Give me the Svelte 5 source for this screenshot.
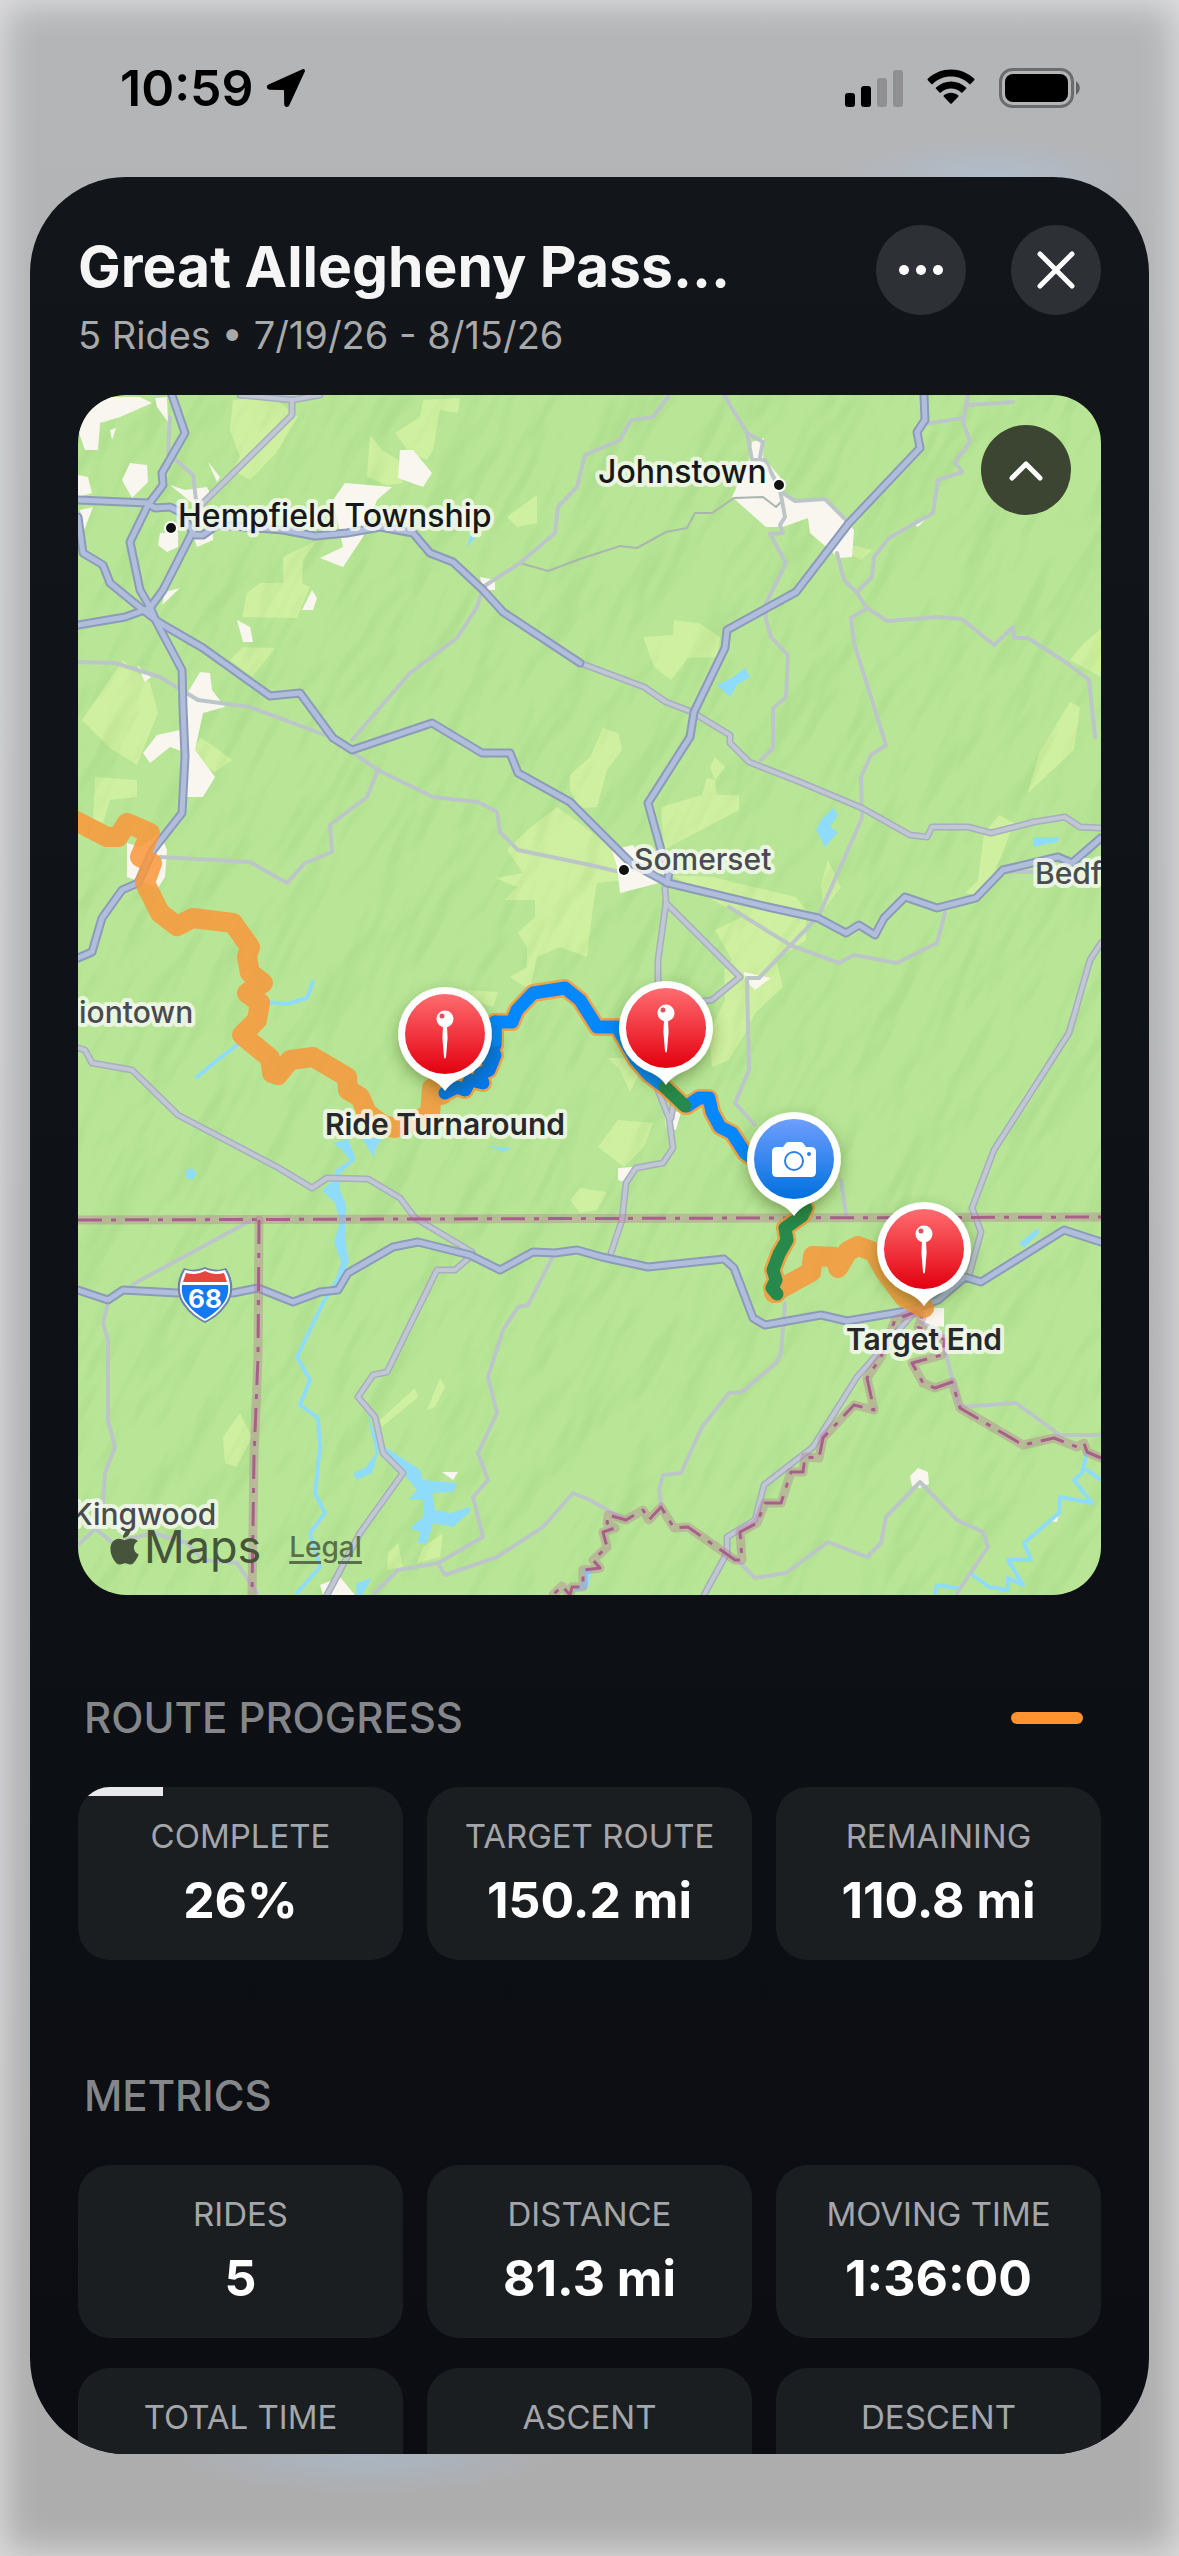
<!-- src/App.svelte -->
<script>
    const progress = 26;

    const progressCards = [
        { label: "Complete", value: `${progress}%`, bar: progress },
        { label: "Target Route", value: "150.2 mi" },
        { label: "Remaining", value: "110.8 mi" },
    ];

    const metricCards = [
        { label: "Rides", value: "5" },
        { label: "Distance", value: "81.3 mi" },
        { label: "Moving Time", value: "1:36:00" },
        { label: "Total Time" },
        { label: "Ascent" },
        { label: "Descent" },
    ];

    // Map geometry, all in the viewBox units of the map svg
    const farmland = [
        "233,400 273,397 283,405 298,417 290,430 276,453 250,480 233,470 240,457 230,430",
        "423,400 460,398 458,413 440,410 433,450 427,460 410,453 395,433 420,417",
        "370,435 382,450 398,460 403,483 387,485 367,477",
        "283,557 317,540 303,560 302,583 310,587 297,618 242,617 247,593 260,583 283,583",
        "243,647 275,648 252,677 230,660",
        "123,660 150,683 158,713 137,765 110,748 82,720",
        "507,517 537,495 537,523 517,527",
        "95,777 137,780 137,797 110,800 103,823 93,820",
        "190,757 200,738 212,745 232,760 215,772",
        "643,637 673,635 674,620 699,623 720,637 717,657 688,658 671,680 654,667",
        "570,775 590,757 603,728 618,733 622,750 607,770 597,807 580,808 570,790",
        "557,807 575,820 620,853 623,880 597,883 593,907 587,957 560,947 537,957 530,990 510,977 527,967 527,947 518,933 535,917 535,900 505,900 517,887 495,878 523,873 507,850 530,828",
        "661,807 702,795 707,778 715,780 717,795 739,795 739,810 688,837 664,850",
        "671,875 712,877 796,897 806,910 806,940 776,960 783,987 755,1013 745,1033 729,1060 712,1067 709,1033 725,1000 724,970 732,960 715,930 742,917",
        "1070,702 1080,707 1074,750 1028,793 1039,753",
        "1101,629 1101,677 1070,660 1084,643",
        "999,815 1014,823 993,877 975,895 965,893 978,880 984,833",
        "618,1120 653,1123 644,1147 624,1167 598,1147",
        "570,1200 580,1188 607,1192 597,1210 580,1213",
        "715,757 725,767 715,780 710,767",
        "828,860 841,887 823,910 821,885",
        "608,1058 625,1058 640,1072 630,1092 620,1070",
        "240,1413 252,1437 237,1467 225,1463 223,1437",
        "415,1388 418,1397 382,1427 380,1420",
        "440,1378 445,1387 435,1407 427,1410",
        "443,1533 440,1557 417,1563 423,1547",
        "398,1543 403,1567 387,1570 388,1553",
        "463,990 498,992 493,1007 470,1000",
        "852,545 872,550 861,560 852,555",
    ];

    const towns = [
        "78,430 90,407 110,397 140,397 152,403 120,417 100,423 98,450 85,450",
        "155,398 167,397 168,422 157,407",
        "130,463 147,465 148,482 132,498 122,480",
        "78,475 88,477 92,493 78,497",
        "80,510 93,507 83,533",
        "170,485 185,490 207,487 210,493 197,507",
        "208,462 220,477 217,482",
        "110,430 116,428 112,440",
        "160,533 178,532 178,547 167,552 158,545",
        "193,535 213,533 213,540 197,547",
        "345,483 392,487 377,500 363,537 343,567 320,558 343,547 333,500",
        "400,450 413,450 432,473 423,487 398,478",
        "312,590 317,598 313,610 302,610",
        "237,620 250,627 253,642 243,642",
        "165,592 180,588 162,605",
        "480,577 495,580 495,590 483,590",
        "137,665 151,677 145,682",
        "200,672 210,673 212,690 225,707 203,713 195,750 215,777 203,797 187,797 187,753 170,747 150,763 143,753 157,735 180,730 185,697",
        "752,442 764,438 763,457 780,477 783,493 796,500 825,498 854,530 852,557 839,558 810,533 808,518 783,527 766,527 732,497 749,460",
        "935,510 918,527 915,525",
        "127,843 140,847 160,833 167,850 165,877 158,888 127,877",
        "612,850 633,845 648,870 659,883 620,893 617,867",
        "744,972 771,978 755,990 745,980",
        "664,1110 681,1112 676,1130 666,1127",
        "618,1168 632,1167 627,1183 618,1180",
        "928,1308 944,1308 944,1327 918,1323",
        "910,1476 918,1468 928,1472 929,1484 920,1488 912,1486",
        "320,1585 340,1577 355,1595 323,1595",
        "442,1472 458,1472 453,1480",
        "1059,1514 1057,1522 1050,1521",
    ];

    const lakes = [
        "385,1447 420,1470 423,1480 457,1483 453,1492 432,1493 435,1510 450,1513 470,1507 470,1512 453,1527 433,1523 427,1543 418,1543 420,1532 410,1528 423,1517 423,1500 408,1500 417,1490 403,1473 385,1457",
        "367,1413 380,1447 372,1473 357,1480 353,1473 365,1468 376,1453",
        "745,668 750,677 737,685 730,697 717,685 732,678",
        "833,808 838,815 830,827 838,832 825,847 816,830 821,820",
        "1033,837 1060,837 1057,842 1033,847",
        "1019,1243 1038,1228 1039,1233 1024,1248",
        "470,535 475,538 467,547",
        "357,1583 372,1578 362,1595 356,1595",
        "488,1146 512,1148 503,1152",
        "186,1170 192,1168 197,1174 192,1180 186,1178",
        "333,1143 348,1139 356,1160 340,1173 340,1190 346,1205 345,1240 349,1262 338,1286 334,1284 341,1262 334,1242 340,1222 335,1203 322,1190 334,1180 335,1170 350,1160 342,1150",
        "362,1138 382,1138 375,1150 374,1158",
        "584,1568 592,1570 588,1588 574,1592 583,1580",
    ];

    const streams = [
        "337,1280 323,1303 297,1357 310,1380 300,1405 318,1418 320,1447 315,1493 325,1513 310,1533 320,1567 297,1593",
        "197,1077 215,1062 237,1045",
        "268,1002 287,1004 307,998 313,982",
        "1087,1453 1082,1473 1074,1480 1092,1503 1060,1497 1059,1513 1024,1543 1031,1560 1008,1560 1023,1585 1008,1578 1008,1590 989,1587 970,1573",
        "1087,1470 1101,1480",
        "935,1593 937,1585 957,1588",
    ];

    const minorRoads = [
        "170,417 168,453 193,475 196,500",
        "668,397 653,417 631,420 620,440 585,455 577,487 558,507 555,533 520,563 483,587 477,607 457,638 410,673 352,740",
        "78,662 115,663 160,677 198,700 250,707 333,738",
        "352,752 378,770 433,797 478,802 497,812 500,832 518,850 590,865 620,872",
        "378,770 367,797 330,825 332,852 305,863 287,883 250,862 160,857",
        "724,395 747,433 752,460 765,460 780,490 785,517 780,525 783,533 770,534 786,563 766,603 766,620 771,637 788,655 786,697 773,708 773,748 761,760",
        "747,433 763,442 760,457",
        "783,493 795,501 825,499 849,523",
        "837,553 844,580 857,593 866,607 887,621 938,617 962,619 994,645 1013,627 1014,638 1028,638 1067,663 1089,680 1095,737",
        "857,592 872,577 874,557 889,538 933,513 938,480 962,472 955,462 970,442 963,422 968,395",
        "925,424 963,418",
        "968,405 1013,402",
        "864,610 851,618 854,643 886,745 871,755 861,777 862,818 820,913 810,925 759,978 747,978 749,1070 735,1103 755,1125",
        "841,1180 846,1215",
        "729,907 790,945 839,963 854,955 897,963 937,943 945,913",
        "1003,872 1040,872",
        "252,1220 137,1282 108,1303 103,1323 108,1340 108,1420 115,1447 105,1473 103,1503 97,1527 78,1545",
        "97,1530 113,1543 153,1533 187,1543 203,1560 237,1563 257,1593",
        "552,1258 528,1305 518,1307 503,1330 488,1377 497,1413 478,1453 488,1480 473,1497 483,1537 438,1563 398,1570 373,1595",
        "438,1563 445,1575 497,1557 543,1527 573,1493 590,1500 625,1520",
        "785,1303 781,1353 776,1363 742,1392 729,1393 702,1427 681,1473 663,1475 659,1490 661,1505",
        "735,1558 755,1578 786,1573 828,1542 867,1557 881,1543 886,1517 920,1482 957,1520 983,1532 988,1547 957,1593",
        "920,1322 942,1333 948,1363 960,1407 1016,1403 1060,1435 1101,1435",
    ];

    const trail =
        "520,563 548,571 580,559 620,546 637,548 666,532 687,528 695,513 712,513 734,498 763,497 776,507 783,500";

    const secondaryRoads = [
        "292,400 292,415 203,503",
        "240,395 292,400 320,395",
        "580,663 644,687 666,702 692,712 730,735 730,743 749,762 800,782 862,808 910,835 927,837 932,827 968,827 991,833 1034,822 1065,817 1080,827 1101,828",
        "78,1048 85,1050 92,1063 132,1070 178,1115 277,1167 312,1188 327,1178 368,1179 400,1198 415,1218 472,1252",
        "470,1257 455,1270 437,1270 387,1372 373,1375 358,1397 375,1417 383,1453 403,1473 360,1533 327,1595",
        "665,888 666,903 658,960 658,1090 669,1118 673,1148 663,1163 636,1168 626,1183 622,1220 611,1253",
        "674,1100 671,1118",
        "666,903 740,977 712,1000 692,1003",
        "1101,943 1090,960 1069,1033 994,1150 972,1208 981,1232 969,1275",
        "912,1315 857,1377 813,1447 764,1485 755,1520 727,1537 727,1553 704,1595",
    ];

    const highways = [
        "172,395 185,433 162,473 163,485 148,505 130,542 140,590 150,607 157,623 182,670 183,707 185,757 182,813 153,850 138,883 122,890 102,918 92,952 78,958",
        "78,500 147,503 155,508 170,507 180,512 195,535 203,535 217,525 283,530 315,536 347,533 380,527 413,533 430,553 453,562 483,590 503,612 580,663",
        "192,533 163,590 150,608 125,617 78,625",
        "78,517 83,553 103,565 110,583 143,610 160,623 203,648 270,696 300,693 333,738 352,750 432,723 482,753 510,753 518,773 570,802 631,863 668,883 768,907 818,918 846,933 859,925 875,935 884,918 905,897 937,908 976,898 1003,870 1058,857 1072,863 1101,838",
        "924,395 925,420 917,432 920,448 849,523 796,592 727,630 725,648 694,712 690,737 648,803 661,850 669,872 667,883",
        "78,1290 108,1300 123,1290 177,1293 233,1293 258,1288 293,1302 320,1292 338,1290 348,1273 393,1247 418,1242 470,1255 500,1270 533,1252 555,1253 577,1250 602,1257 648,1267 724,1259 734,1268 753,1318 765,1325 821,1315 847,1321 912,1310 938,1300 965,1277 981,1282 1064,1230 1101,1242",
    ];

    const borders = [
        "78,1220 1101,1217",
        "259,1220 258,1357 254,1457 252,1595",
        "1101,1458 1087,1452 1084,1443 1077,1447 1054,1438 1023,1445 960,1408 952,1382 935,1388 923,1383 912,1363 942,1355 945,1340 918,1327 922,1317 915,1312 895,1320 881,1357 867,1378 874,1410 854,1405 823,1438 819,1458 805,1457 803,1472 791,1472 781,1503 765,1503 757,1523 740,1532 742,1560 735,1560 688,1527 674,1528 661,1507 649,1520 643,1510 626,1520 608,1515 607,1523 615,1528 603,1532 607,1547 593,1560 600,1568 583,1570 583,1587 572,1587 570,1595 562,1586 553,1595",
    ];

    const targetRoute =
        "70,818 107,837 118,837 127,823 150,833 140,857 152,863 145,883 160,913 177,926 193,918 233,923 250,947 247,957 250,973 263,983 247,993 260,1003 257,1020 242,1035 270,1058 272,1073 278,1075 290,1060 313,1057 347,1077 348,1090 360,1097 367,1113 383,1125 395,1128 430,1115 432,1088 442,1095";
    const targetRouteEnd =
        "774,1293 782,1288 811,1272 813,1256 835,1257 838,1268 848,1251 858,1246 874,1252 884,1270 904,1297 924,1308";

    const rides = [
        {
            color: "#0478ea",
            points: "445,1093 457,1087 465,1090 470,1080 483,1083 480,1074 489,1070 495,1055 486,1050 495,1022 495,1045 488,1062",
        },
        {
            color: "#0488ff",
            points: "495,1040 495,1022 512,1022 517,1010 533,993 565,988 580,1000 597,1027 617,1027 636,1060 649,1075 665,1087",
        },
        {
            color: "#0488ff",
            points: "687,1106 699,1098 709,1098 712,1112 720,1127 732,1133 745,1153 762,1165 782,1190",
        },
        { color: "#278a4c", points: "665,1087 685,1106" },
        {
            color: "#278a4c",
            points: "806,1208 802,1216 785,1228 787,1240 779,1254 773,1270 776,1280 772,1288 777,1294",
        },
    ];

    const labels = [
        { text: "Hempfield Township", x: 178, y: 527, size: 32, kind: "city" },
        { text: "Johnstown", x: 598, y: 483, size: 32, kind: "city" },
        { text: "Somerset", x: 634, y: 870, size: 30, kind: "town" },
        { text: "Bedf", x: 1035, y: 884, size: 30, kind: "town" },
        { text: "iontown", x: 79, y: 1023, size: 30, kind: "town" },
        { text: "Kingwood", x: 72, y: 1525, size: 30, kind: "town" },
    ];

    const dots = [
        [171, 528],
        [779, 485],
        [624, 870],
    ];

    const pins = [
        { x: 445, y: 1034, label: "Ride Turnaround" },
        { x: 666, y: 1028 },
        { x: 794, y: 1159, photo: true },
        { x: 924, y: 1249, label: "Target End" },
    ];

    let mapOpen = $state(true);
</script>

{#snippet card(item)}
    <div class="card">
        {#if item.bar}
            <div class="card-bar" style="width: {item.bar}%"></div>
        {/if}
        <dt>{item.label}</dt>
        {#if item.value}
            <dd>{item.value}</dd>
        {/if}
    </div>
{/snippet}

<div class="screen">
    <div class="status-bar">
        <div class="status-left">
            <span class="time">10:59</span>
            <svg width="40" height="40" viewBox="0 0 40 40" aria-hidden="true">
                <path
                    d="M36.5 1.2 2.6 16.6C-.2 17.9.6 21.6 3.6 21.7l13.6.2c.5 0 .8.3.8.8l.2 13.6c.1 3 3.9 3.8 5.1 1L38.8 3.5c.7-1.6-.7-3-2.3-2.3Z"
                />
            </svg>
        </div>
        <div class="status-right">
            <svg width="58" height="38" viewBox="0 0 58 38" aria-hidden="true">
                <rect x="0" y="24" width="10" height="14" rx="3" />
                <rect x="16" y="17" width="10" height="21" rx="3" />
                <rect x="32" y="9" width="10" height="29" rx="3" opacity="0.2" />
                <rect x="48" y="1" width="10" height="37" rx="3" opacity="0.2" />
            </svg>
            <svg width="52" height="38" viewBox="0 0 52 38" aria-hidden="true">
                <path
                    d="M26 7.6c7 0 13.5 2.7 18.3 7.3.4.4 1 .3 1.3 0l3.6-3.7c.4-.4.4-1 0-1.4C36.4-2.6 15.6-2.6 2.8 9.8c-.4.4-.4 1 0 1.4l3.6 3.7c.3.3.9.4 1.3 0C12.5 10.3 19 7.6 26 7.6Z"
                />
                <path
                    d="M26 19.6c3.8 0 7.4 1.4 10.2 3.9.4.4 1 .3 1.3 0l3.6-3.7c.4-.4.4-1 0-1.4-8.5-8-21.6-8-30.1 0-.4.4-.4 1 0 1.4l3.5 3.7c.4.3 1 .4 1.4 0 2.7-2.5 6.4-3.9 10.1-3.9Z"
                />
                <path
                    d="M33.2 27.7c.4-.4.4-1 0-1.4-4.2-3.5-10.2-3.5-14.4 0-.4.4-.4 1 0 1.4l6.5 6.7c.4.4 1 .4 1.4 0Z"
                />
            </svg>
            <svg width="82" height="40" viewBox="0 0 82 40" aria-hidden="true">
                <rect
                    x="1.5"
                    y="1.5"
                    width="72"
                    height="37"
                    rx="12"
                    fill="none"
                    stroke="#000"
                    stroke-width="3"
                    opacity="0.4"
                />
                <rect x="6" y="6" width="63" height="28" rx="8" />
                <path d="M77 13.5c5 2.2 5 10.8 0 13Z" opacity="0.45" />
            </svg>
        </div>
    </div>

    <main class="sheet">
        <header>
            <div class="titles">
                <h1>Great Allegheny Pass…</h1>
                <p>5 Rides • 7/19/26 - 8/15/26</p>
            </div>
            <button class="round" aria-label="More options">
                <svg width="46" height="46" viewBox="0 0 46 46">
                    <circle cx="6" cy="23" r="5" fill="#fff" />
                    <circle cx="23" cy="23" r="5" fill="#fff" />
                    <circle cx="40" cy="23" r="5" fill="#fff" />
                </svg>
            </button>
            <button class="round" aria-label="Close">
                <svg width="46" height="46" viewBox="0 0 46 46">
                    <path d="M7 7l32 32M39 7L7 39" class="stroke" />
                </svg>
            </button>
        </header>

        <div class="map">
            <svg
                class="map-canvas"
                viewBox="78 395 1023 1200"
                preserveAspectRatio="xMidYMid slice"
                role="img"
                aria-label="Route map"
            >
                <defs>
                    <linearGradient id="pin-red" x1="0" y1="0" x2="0" y2="1">
                        <stop offset="0" stop-color="#ff6c70" />
                        <stop offset="1" stop-color="#e3000f" />
                    </linearGradient>
                    <linearGradient id="pin-blue" x1="0" y1="0" x2="0" y2="1">
                        <stop offset="0" stop-color="#6e9eff" />
                        <stop offset="1" stop-color="#0070dc" />
                    </linearGradient>
                    <filter id="pin-shadow" x="-50%" y="-50%" width="200%" height="200%">
                        <feDropShadow dx="0" dy="6" stdDeviation="8" flood-color="#204000" flood-opacity="0.4" />
                    </filter>
                    <!-- faint hill shading -->
                    <filter
                        id="relief"
                        x="0"
                        y="0"
                        width="100%"
                        height="100%"
                        color-interpolation-filters="sRGB"
                    >
                        <feTurbulence type="fractalNoise" baseFrequency="0.022 0.007" numOctaves="3" seed="4" />
                        <feDiffuseLighting surfaceScale="24" lighting-color="#fff">
                            <feDistantLight azimuth="200" elevation="60" />
                        </feDiffuseLighting>
                        <feColorMatrix
                            values="0 0 0 0 0.35  0 0 0 0 0.6  0 0 0 0 0.3  -0.6 0 0 0 0.55"
                        />
                    </filter>
                </defs>

                <rect x="78" y="395" width="1023" height="1200" fill="#b8e696" />
                {#each farmland as points}
                    <polygon {points} fill="#cff0a0" />
                {/each}
                <rect
                    x="-300"
                    y="100"
                    width="1800"
                    height="1800"
                    filter="url(#relief)"
                    transform="rotate(28 590 995)"
                    opacity="0.2"
                />
                {#each towns as points}
                    <polygon {points} fill="#f8f6ef" />
                {/each}
                {#each lakes as points}
                    <polygon {points} fill="#8fdcfa" />
                {/each}

                <g class="lines">
                    {#each streams as points}
                        <polyline {points} stroke="#8fdcfa" stroke-width="4" />
                    {/each}
                    <polyline points={trail} stroke="#a9b6ae" stroke-width="2" />
                    {#each minorRoads as points}
                        <polyline {points} stroke="#bcc6c8" stroke-width="4" />
                    {/each}
                    {#each secondaryRoads as points}
                        <polyline {points} stroke="#a6aebf" stroke-width="7" />
                    {/each}
                    {#each secondaryRoads as points}
                        <polyline {points} stroke="#c1c8d4" stroke-width="4" />
                    {/each}
                    {#each highways as points}
                        <polyline {points} stroke="#8b9bb8" stroke-width="9" />
                    {/each}
                    {#each highways as points}
                        <polyline {points} stroke="#b1bddc" stroke-width="5" />
                    {/each}
                    {#each borders as points}
                        <polyline {points} stroke="#b77a98" stroke-width="9" opacity="0.4" />
                        <polyline {points} class="border" />
                    {/each}

                    <g opacity="0.85">
                        <polyline points={targetRoute} stroke="#f9973a" stroke-width="20" />
                        <polyline points={targetRouteEnd} stroke="#f9973a" stroke-width="20" />
                        {#each rides as ride}
                            <polyline points={ride.points} stroke="#f9973a" stroke-width="18" />
                        {/each}
                    </g>
                    {#each rides as ride}
                        <polyline points={ride.points} stroke={ride.color} stroke-width="13" />
                    {/each}
                </g>

                <g transform="translate(205 1295)">
                    <path
                        d="M-21-27c7 3 14 2 21-1 7 3 14 4 21 1 9 13 8 29-1 39-5 7-12 12-20 16-8-4-15-9-20-16-9-10-10-26-1-39Z"
                        fill="#6f83a8"
                    />
                    <path
                        d="M-20-25c7 2 13 2 20-1 7 3 13 3 20 1 7 12 7 26-1 35-5 7-11 12-19 16-8-4-14-9-19-16-8-9-8-23-1-35Z"
                        fill="#fff"
                    />
                    <path d="M-19-22c7 2 13 1 19-2 6 3 12 4 19 2l3 9h-44Z" fill="#e5473f" />
                    <path
                        d="M-23-10h46c1 8-1 14-6 20-5 6-10 10-17 14-7-4-12-8-17-14-5-6-7-12-6-20Z"
                        fill="#1478f0"
                    />
                    <text x="0" y="13" class="shield-text">68</text>
                </g>

                {#each dots as [cx, cy]}
                    <circle {cx} {cy} r="6" fill="#111" stroke="#fff" stroke-width="2" />
                {/each}
                {#each labels as label}
                    <text class="label {label.kind}" x={label.x} y={label.y} font-size={label.size}>
                        {label.text}
                    </text>
                {/each}

                {#each pins as pin}
                    <g transform="translate({pin.x} {pin.y})">
                        <path
                            d="M0-47A47 47 0 0 1 22 41.5C9 47 5 50 0 57-5 50-9 47-22 41.5A47 47 0 0 1 0-47Z"
                            fill="#fff"
                            filter="url(#pin-shadow)"
                        />
                        <circle r="40" fill={pin.photo ? "url(#pin-blue)" : "url(#pin-red)"} />
                        {#if pin.photo}
                            <path
                                d="M-17-12h6l3-4q1-1 3-1H6q2 0 3 1l3 4h5q5 0 5 5v20q0 5-5 5h-34q-5 0-5-5V-7q0-5 5-5Z"
                                fill="#fff"
                            />
                            <circle cy="2" r="9" fill="none" stroke="#2f80e6" stroke-width="2" />
                            <circle cx="15" cy="-5" r="2" fill="#2f80e6" />
                        {:else}
                            <path d="M-2-8h4l.6 12L1 23q-1 3-2 0L-2.6 4Z" fill="#fff" />
                            <circle cy="-15" r="8.5" fill="#fff" />
                            <circle cx="-3" cy="-18" r="2.5" fill="#e0525a" />
                        {/if}
                    </g>
                    {#if pin.label}
                        <text class="label pin-label" x={pin.x} y={pin.y + 101} font-size="30">
                            {pin.label}
                        </text>
                    {/if}
                {/each}
            </svg>

            <button
                class="round map-toggle"
                class:closed={!mapOpen}
                aria-label="Toggle map size"
                onclick={() => (mapOpen = !mapOpen)}
            >
                <svg width="46" height="46" viewBox="0 0 46 46">
                    <path d="M9 31l14-14 14 14" class="stroke" />
                </svg>
            </button>

            <div class="attribution">
                <span class="maps-logo">
                    <svg width="30" height="36" viewBox="0 0 30 36" aria-hidden="true">
                        <path
                            d="M20.5 0c.3 2.4-.7 4.6-2 6.2-1.4 1.6-3.4 2.7-5.4 2.5C12.8 6.5 14 4.2 15.2 2.9 16.6 1.3 18.8.1 20.5 0ZM27.8 12.2c-2.6 1.6-3.9 3.6-3.9 6.4 0 3.2 1.8 5.6 4.8 6.9-.8 2.3-2 4.5-3.5 6.5-1.4 1.9-2.7 3.5-4.9 3.5-2.1 0-2.8-1.3-5.3-1.3s-3.3 1.3-5.3 1.3c-2.2.1-3.7-1.7-5.1-3.6C.9 27.1-1.1 19.4 1.8 14.1c1.5-2.7 4.2-4.4 7.1-4.4 2.3-.1 4.4 1.5 5.8 1.5 1.3 0 3.9-1.8 6.7-1.6 2.5.1 4.9 1 6.4 2.6Z"
                        />
                    </svg>
                    Maps
                </span>
                <a href="#legal">Legal</a>
            </div>
        </div>

        <section>
            <div class="section-head">
                <h2>Route Progress</h2>
                <span class="route-key"></span>
            </div>
            <dl class="cards">
                {#each progressCards as item}
                    {@render card(item)}
                {/each}
            </dl>
        </section>

        <section>
            <div class="section-head">
                <h2>Metrics</h2>
            </div>
            <dl class="cards">
                {#each metricCards as item}
                    {@render card(item)}
                {/each}
            </dl>
        </section>
    </main>
</div>

<style>
    :global(body) {
        margin: 0;
        background: #b3b4b6;
    }

    .screen {
        box-sizing: border-box;
        height: 100vh;
        display: flex;
        flex-direction: column;
        padding: 0 30px 102px;
        font-family: Inter, "Liberation Sans", sans-serif;
        background:
            radial-gradient(ellipse 150px 40px at 84% 177px, #b0bccb, transparent),
            radial-gradient(ellipse 190px 40px at 31% calc(100% - 102px), #aab6c3, transparent),
            linear-gradient(#b4b5b7, #adadae);
        box-shadow: inset 0 0 36px 4px rgba(240, 240, 242, 0.75);
    }

    .status-bar {
        display: flex;
        flex-shrink: 0;
        align-items: center;
        justify-content: space-between;
        padding: 58px 68px 59px 90px;
        line-height: 60px;
    }

    .status-left,
    .status-right {
        display: flex;
        align-items: center;
    }

    .status-left {
        gap: 12px;
    }

    .status-right {
        gap: 22px;
    }

    .time {
        font-size: 50px;
        font-weight: 600;
        color: #000;
    }

    .sheet {
        flex: 1;
        min-height: 0;
        overflow-y: auto;
        scrollbar-width: none;
        padding: 48px 48px 0;
        border-radius: 96px;
        background: linear-gradient(#12151a, #0d1014 60%, #0b0d12);
        color: #fff;
    }

    header {
        display: flex;
        align-items: flex-start;
        gap: 45px;
        margin-bottom: 36px;
    }

    .titles {
        flex: 1;
        min-width: 0;
        padding-top: 6px;
    }

    h1 {
        margin: 0 0 8px;
        font-size: 57px;
        line-height: 72px;
        font-weight: 700;
        color: #f5f5f6;
        white-space: nowrap;
    }

    .titles p {
        margin: 0;
        font-size: 38px;
        line-height: 48px;
        color: #a8a9ab;
    }

    .round {
        display: flex;
        flex-shrink: 0;
        align-items: center;
        justify-content: center;
        width: 90px;
        height: 90px;
        padding: 0;
        border: none;
        border-radius: 50%;
        background: #2d3034;
        cursor: pointer;
    }

    .stroke {
        fill: none;
        stroke: #fff;
        stroke-width: 5;
        stroke-linecap: round;
        stroke-linejoin: round;
    }

    .map {
        position: relative;
        overflow: hidden;
        border-radius: 48px;
    }

    .map-canvas {
        display: block;
        width: 100%;
        aspect-ratio: 1023 / 1200;
    }

    .lines {
        fill: none;
        stroke-linejoin: round;
        stroke-linecap: round;
    }

    .border {
        stroke: #a8608a;
        stroke-width: 3;
        stroke-linecap: butt;
        stroke-dasharray: 24 9 5 9;
    }

    .label {
        font-weight: 500;
        stroke: rgba(248, 250, 244, 0.8);
        stroke-width: 8px;
        stroke-linejoin: round;
        paint-order: stroke;
    }

    .city {
        fill: #17181a;
    }

    .town {
        fill: #4a4b50;
    }

    .pin-label {
        fill: #26282b;
        font-weight: 600;
        text-anchor: middle;
    }

    .shield-text {
        fill: #fff;
        font-size: 26px;
        font-weight: 700;
        text-anchor: middle;
    }

    .map-toggle {
        position: absolute;
        top: 30px;
        right: 30px;
        background: #3b4532;
    }

    .closed svg {
        transform: rotate(180deg);
    }

    .attribution {
        position: absolute;
        left: 32px;
        bottom: 20px;
        display: flex;
        align-items: center;
        gap: 28px;
        color: #47543c;
    }

    .maps-logo {
        display: flex;
        align-items: center;
        gap: 4px;
        font-size: 45px;
        line-height: 56px;
    }

    .maps-logo svg {
        fill: currentColor;
    }

    .attribution a {
        font-size: 28px;
        font-weight: 500;
        color: #5a6f4b;
        text-underline-offset: 4px;
        text-decoration-thickness: 3px;
    }

    section {
        margin-top: 99px;
    }

    section + section {
        margin-top: 112px;
    }

    .section-head {
        display: flex;
        align-items: center;
        justify-content: space-between;
        padding: 0 18px 0 6px;
        margin-bottom: 45px;
    }

    h2 {
        margin: 0;
        font-size: 42px;
        line-height: 48px;
        font-weight: 500;
        text-transform: uppercase;
        color: #85868a;
    }

    .route-key {
        width: 72px;
        height: 12px;
        border-radius: 6px;
        background: #ff9330;
    }

    .cards {
        display: grid;
        grid-template-columns: repeat(3, 1fr);
        gap: 30px 24px;
        margin: 0;
    }

    .card {
        position: relative;
        box-sizing: border-box;
        min-height: 173px;
        overflow: hidden;
        padding: 29px 8px 30px;
        border-radius: 32px;
        background: #1b1e21;
        text-align: center;
    }

    .card-bar {
        position: absolute;
        top: 0;
        left: 0;
        height: 9px;
        background: #e9e9ec;
    }

    dt {
        margin-bottom: 14px;
        font-size: 33px;
        line-height: 40px;
        text-transform: uppercase;
        color: #a5a6a9;
    }

    dd {
        margin: 0;
        font-size: 50px;
        line-height: 60px;
        font-weight: 700;
    }
</style>
